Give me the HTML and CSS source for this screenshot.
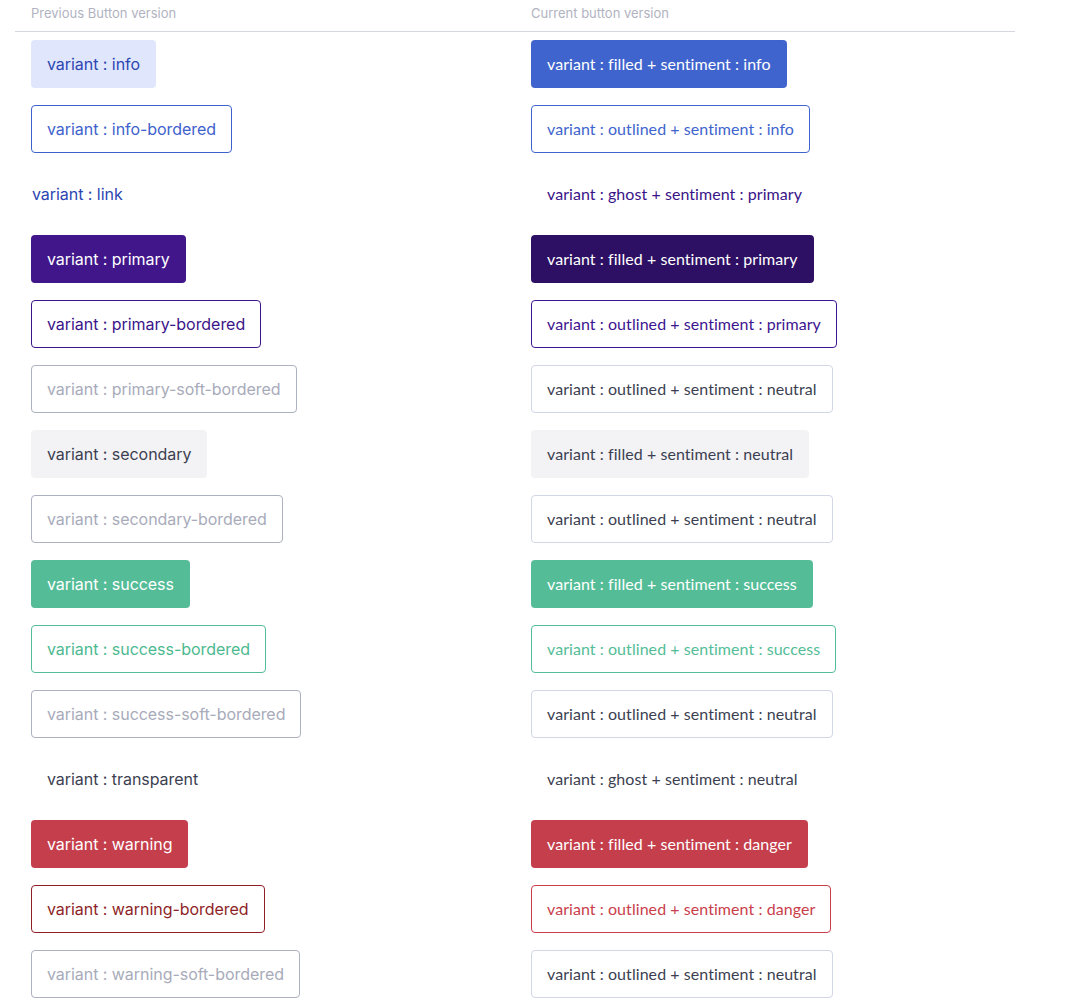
FILE: index.html
```html
<!DOCTYPE html>
<html>
<head>
<meta charset="utf-8">
<link rel="stylesheet" href="styles.css">
</head>
<body>
<div class="table">
  <div class="head">
    <div class="hcell">Previous Button version</div>
    <div class="hcell">Current button version</div>
  </div>
  <div class="row">
    <div class="cell"><span class="btn old info">variant : info</span></div>
    <div class="cell"><span class="btn new filled-info">variant : filled + sentiment : info</span></div>
  </div>
  <div class="row">
    <div class="cell"><span class="btn old info-bordered">variant : info-bordered</span></div>
    <div class="cell"><span class="btn new outlined-info">variant : outlined + sentiment : info</span></div>
  </div>
  <div class="row">
    <div class="cell"><span class="btn old link">variant : link</span></div>
    <div class="cell"><span class="btn new ghost-primary">variant : ghost + sentiment : primary</span></div>
  </div>
  <div class="row">
    <div class="cell"><span class="btn old primary">variant : primary</span></div>
    <div class="cell"><span class="btn new filled-primary">variant : filled + sentiment : primary</span></div>
  </div>
  <div class="row">
    <div class="cell"><span class="btn old primary-bordered">variant : primary-bordered</span></div>
    <div class="cell"><span class="btn new outlined-primary">variant : outlined + sentiment : primary</span></div>
  </div>
  <div class="row">
    <div class="cell"><span class="btn old soft-bordered">variant : primary-soft-bordered</span></div>
    <div class="cell"><span class="btn new outlined-neutral">variant : outlined + sentiment : neutral</span></div>
  </div>
  <div class="row">
    <div class="cell"><span class="btn old secondary">variant : secondary</span></div>
    <div class="cell"><span class="btn new filled-neutral">variant : filled + sentiment : neutral</span></div>
  </div>
  <div class="row">
    <div class="cell"><span class="btn old soft-bordered">variant : secondary-bordered</span></div>
    <div class="cell"><span class="btn new outlined-neutral">variant : outlined + sentiment : neutral</span></div>
  </div>
  <div class="row">
    <div class="cell"><span class="btn old success">variant : success</span></div>
    <div class="cell"><span class="btn new filled-success">variant : filled + sentiment : success</span></div>
  </div>
  <div class="row">
    <div class="cell"><span class="btn old success-bordered">variant : success-bordered</span></div>
    <div class="cell"><span class="btn new outlined-success">variant : outlined + sentiment : success</span></div>
  </div>
  <div class="row">
    <div class="cell"><span class="btn old soft-bordered">variant : success-soft-bordered</span></div>
    <div class="cell"><span class="btn new outlined-neutral">variant : outlined + sentiment : neutral</span></div>
  </div>
  <div class="row">
    <div class="cell"><span class="btn old transparent">variant : transparent</span></div>
    <div class="cell"><span class="btn new ghost-neutral">variant : ghost + sentiment : neutral</span></div>
  </div>
  <div class="row">
    <div class="cell"><span class="btn old warning">variant : warning</span></div>
    <div class="cell"><span class="btn new filled-danger">variant : filled + sentiment : danger</span></div>
  </div>
  <div class="row">
    <div class="cell"><span class="btn old warning-bordered">variant : warning-bordered</span></div>
    <div class="cell"><span class="btn new outlined-danger">variant : outlined + sentiment : danger</span></div>
  </div>
  <div class="row">
    <div class="cell"><span class="btn old soft-bordered">variant : warning-soft-bordered</span></div>
    <div class="cell"><span class="btn new outlined-neutral">variant : outlined + sentiment : neutral</span></div>
  </div>
</div>
</body>
</html>
```

FILE: styles.css
```css
html, body {
  margin: 0;
  padding: 0;
  background: #ffffff;
}

body {
  font-family: Inter, "Liberation Sans", sans-serif;
}

.table {
  margin-left: 15px;
  width: 1000px;
}

.head {
  display: grid;
  grid-template-columns: 500px 500px;
  border-bottom: 1px solid #d6d8e1;
  height: 32px;
  box-sizing: border-box;
}

.hcell {
  padding: 4px 16px 0;
  font-size: 13px;
  line-height: 18px;
  color: #b1b3c1;
}

.row {
  display: grid;
  grid-template-columns: 500px 500px;
  height: 65px;
}

.cell {
  padding: 8px 16px 0;
  display: flex;
  align-items: flex-start;
}

.btn {
  display: inline-flex;
  align-items: center;
  box-sizing: border-box;
  height: 48px;
  padding: 0 15px;
  border: 1px solid transparent;
  border-radius: 4px;
  white-space: nowrap;
}

.old {
  font-family: Inter, "Liberation Sans", sans-serif;
  font-size: 16px;
  letter-spacing: -0.05px;
}

.new {
  font-family: Lato, "Open Sans", sans-serif;
  font-size: 16px;
  letter-spacing: 0.06px;
  padding-bottom: 2px;
}

/* previous variants */
.info { background: #e0e7fc; color: #2c46b2; }
.info-bordered { border-color: #3e62cc; color: #3e62cc; }
.link { padding: 0; color: #2c46b2; }
.primary { background: #40168a; color: #ffffff; }
.primary-bordered { border-color: #3c1589; color: #3c1589; }
.soft-bordered { border-color: #adb0be; color: #a8abba; }
.secondary { background: #f3f3f6; color: #3c3f51; }
.success { background: #54bd97; color: #ffffff; }
.success-bordered { border-color: #54bd97; color: #4cb98f; }
.transparent { color: #3c3f51; }
.warning { background: #c43e4b; color: #ffffff; }
.warning-bordered { border-color: #8e1f27; color: #8e1f27; }

/* current variants */
.filled-info { background: #4064cd; color: #ffffff; }
.outlined-info { border-color: #4064cd; color: #4064cd; }
.ghost-primary { color: #3a1488; }
.filled-primary { background: #2d0f63; color: #ffffff; }
.outlined-primary { border-color: #3d1590; color: #3d1590; }
.outlined-neutral { border-color: #d3d6e4; color: #3c3f51; }
.filled-neutral { background: #f3f3f6; color: #3c3f51; }
.filled-success { background: #54bd97; color: #ffffff; }
.outlined-success { border-color: #54bd97; color: #54bd97; }
.ghost-neutral { color: #3c3f51; }
.filled-danger { background: #c43e4b; color: #ffffff; }
.outlined-danger { border-color: #c93e4b; color: #c93e4b; }
```
